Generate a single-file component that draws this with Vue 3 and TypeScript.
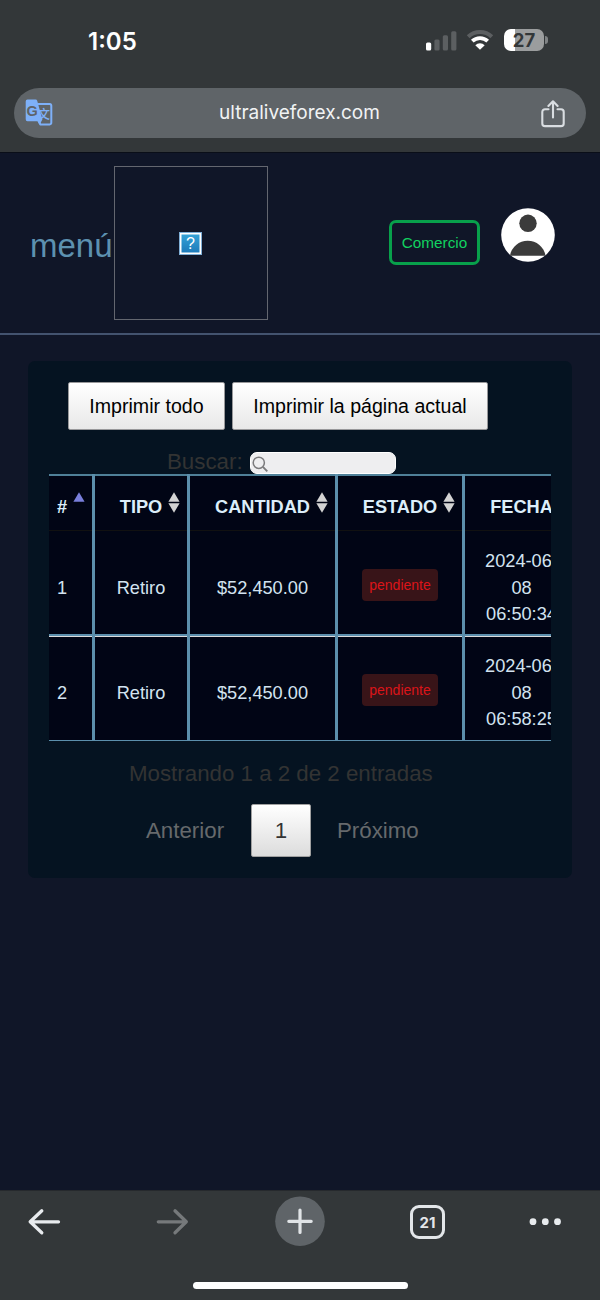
<script setup lang="ts">
interface Row {
  id: number
  type: string
  amount: string
  status: string
  date: string[]
}

const columns: string[] = ['#', 'TIPO', 'CANTIDAD', 'ESTADO', 'FECHA']

const rows: Row[] = [
  { id: 1, type: 'Retiro', amount: '$52,450.00', status: 'pendiente', date: ['2024-06-', '08', '06:50:34'] },
  { id: 2, type: 'Retiro', amount: '$52,450.00', status: 'pendiente', date: ['2024-06-', '08', '06:58:25'] },
]
</script>

<template>
  <div class="phone">
    <header class="chrome-top">
      <div class="status">
        <span class="time">1:05</span>
        <div class="indicators">
          <svg class="signal" width="31" height="20" viewBox="0 0 31 20">
            <rect x="0" y="11.5" width="5.2" height="8" rx="1.5" fill="#fff" />
            <rect x="8.4" y="8.5" width="5.2" height="11" rx="1.5" fill="#5c5f61" />
            <rect x="16.8" y="4.3" width="5.2" height="15.2" rx="1.5" fill="#5c5f61" />
            <rect x="25.2" y="0.3" width="5.2" height="19.2" rx="1.5" fill="#5c5f61" />
          </svg>
          <svg class="wifi" width="28" height="20" viewBox="0 0 28 20">
            <path d="M2.2 6.8A17 17 0 0 1 25.8 6.8" fill="none" stroke="#5c5f61" stroke-width="4" />
            <path d="M6.3 11.2A11.2 11.2 0 0 1 21.7 11.2" fill="none" stroke="#fff" stroke-width="3.8" />
            <path d="M9.3 15.2A6.8 6.8 0 0 1 18.7 15.2L14 19.8Z" fill="#fff" />
          </svg>
          <div class="battery"><span>27</span></div>
          <i class="battery-tip"></i>
        </div>
      </div>
      <div class="address">
        <svg class="translate" width="28" height="28" viewBox="0 0 28 28">
          <path d="M12.5 4.9H24.6A1.9 1.9 0 0 1 26.3 6.8V23.5A1.9 1.9 0 0 1 24.6 25.4H15.5L13 21" fill="none" stroke="#7eb0f8" stroke-width="2" />
          <path d="M2.5 0.5H10.6Q11.8 0.5 12.2 1.8L17.4 20.4L14.4 26L12.8 22.3H2.5Q0.7 22.3 0.7 20.3V2.5Q0.7 0.5 2.5 0.5Z" fill="#7eb0f8" />
          <text x="1.5" y="16.8" class="g" fill="#5f6468">G</text>
          <text x="12.6" y="20.4" class="wen" fill="#7eb0f8">文</text>
        </svg>
        <span class="url">ultraliveforex.com</span>
        <svg class="share" width="24" height="28" viewBox="0 0 24 28">
          <path d="M7.5 9.2H4A2.7 2.7 0 0 0 1.3 11.9V23.4A2.7 2.7 0 0 0 4 26.1H20A2.7 2.7 0 0 0 22.7 23.4V11.9A2.7 2.7 0 0 0 20 9.2H16.5M12 17.5V1.5M7.4 6L12 1.3L16.6 6" fill="none" stroke="#d9dde1" stroke-width="2.1" stroke-linecap="round" stroke-linejoin="round" />
        </svg>
      </div>
    </header>

    <main class="page">
      <nav class="site-nav">
        <span class="menu">menú</span>
        <div class="logo"><span class="missing">?</span></div>
        <button class="trade">Comercio</button>
        <svg class="avatar" width="54" height="54" viewBox="0 0 54 54">
          <circle cx="27" cy="27" r="26.8" fill="#fff" />
          <circle cx="27" cy="15.3" r="8.7" fill="#3b3b3b" />
          <path d="M9 47.7A18 17.8 0 0 1 44.5 47.7Z" fill="#3b3b3b" />
        </svg>
      </nav>

      <section class="panel">
        <div class="print">
          <button>Imprimir todo</button>
          <button>Imprimir la página actual</button>
        </div>
        <div class="filter">
          <span>Buscar:</span>
          <div class="search">
            <svg width="17" height="17" viewBox="0 0 17 17">
              <circle cx="6.8" cy="6.8" r="5.6" fill="none" stroke="#7b7b7d" stroke-width="1.5" />
              <path d="M10.9 10.9L15.3 15.3" stroke="#7b7b7d" stroke-width="1.9" />
            </svg>
          </div>
        </div>
        <div class="scroll">
          <table>
            <colgroup>
              <col v-for="c in columns" :key="c" />
            </colgroup>
            <thead>
              <tr>
                <th v-for="(c, i) in columns" :key="c">
                  {{ c }}
                  <svg v-if="i < 4" class="sort" width="12" height="21" viewBox="0 0 12 21">
                    <path d="M6 0.2L11.6 9.8H0.4Z" :fill="i ? '#d3d3d3' : '#797fdb'" />
                    <path v-if="i" d="M0.4 11.2H11.6L6 20.8Z" fill="#d3d3d3" />
                  </svg>
                </th>
              </tr>
            </thead>
            <tbody>
              <tr v-for="r in rows" :key="r.id">
                <td>{{ r.id }}</td>
                <td>{{ r.type }}</td>
                <td>{{ r.amount }}</td>
                <td><span class="badge">{{ r.status }}</span></td>
                <td><div v-for="d in r.date" :key="d" class="line">{{ d }}</div></td>
              </tr>
            </tbody>
          </table>
        </div>
        <p class="info">Mostrando 1 a 2 de 2 entradas</p>
        <div class="pager">
          <span>Anterior</span>
          <button>1</button>
          <span>Próximo</span>
        </div>
      </section>
    </main>

    <footer class="chrome-bottom">
      <div class="tools">
        <svg width="120" height="50" viewBox="0 0 120 50">
          <path d="M58.5 25.8H31M41.8 14.8L30.2 25.8L41.8 36.8" fill="none" stroke="#e8ebee" stroke-width="3.3" stroke-linecap="round" stroke-linejoin="round" />
        </svg>
        <svg width="120" height="50" viewBox="0 0 120 50">
          <path d="M38.3 25.8H65.5M55 14.8L66.3 25.8L55 36.8" fill="none" stroke="#76797b" stroke-width="3.3" stroke-linecap="round" stroke-linejoin="round" />
        </svg>
        <svg width="120" height="50" viewBox="0 0 120 50">
          <circle cx="60" cy="25.2" r="24.8" fill="#5f6468" />
          <path d="M48.8 25.3H71.2M60 14.1V36.5" fill="none" stroke="#e1e4e7" stroke-width="3.2" stroke-linecap="round" />
        </svg>
        <div class="tab-slot"><span class="tabs">21</span></div>
        <svg width="120" height="50" viewBox="0 0 120 50">
          <g fill="#e8ebee">
            <circle cx="53" cy="25.7" r="3.4" />
            <circle cx="65.3" cy="25.7" r="3.4" />
            <circle cx="77.5" cy="25.7" r="3.4" />
          </g>
        </svg>
      </div>
      <div class="home"></div>
    </footer>
  </div>
</template>

<style>
body {
  margin: 0;
  background: #101628;
}
</style>

<style scoped>
.phone {
  width: 600px;
  height: 1300px;
  display: flex;
  flex-direction: column;
  overflow: hidden;
  background: #101628;
  font-family: "Liberation Sans", Arial, sans-serif;
}
.phone * {
  box-sizing: border-box;
}
.phone svg {
  display: block;
  flex: none;
}
button {
  margin: 0;
  padding: 0;
  font-family: inherit;
}
.chrome-top {
  height: 153px;
  flex: none;
  background: #333739;
  border-bottom: 1px solid #0a0e18;
}
.status {
  height: 88px;
  display: flex;
  justify-content: space-between;
  padding: 0 52px 0 88px;
}
.time {
  margin-top: 27px;
  font: 600 24px/30px Inter, sans-serif;
  color: #fff;
}
.indicators {
  display: flex;
  height: 22px;
  margin-top: 29px;
}
.signal {
  margin-top: 2px;
}
.wifi {
  margin: 1px 0 0 9px;
}
.battery {
  width: 40px;
  height: 22px;
  margin-left: 10px;
  border-radius: 7px;
  background: linear-gradient(90deg, #fff 11px, #9b9d9e 11px);
  color: #333739;
  font: 700 18.5px/23px Inter, sans-serif;
  text-align: center;
}
.battery-tip {
  width: 3px;
  height: 8px;
  margin: 7px 0 0 1px;
  border-radius: 0 3px 3px 0;
  background: #808385;
}
.address {
  height: 50px;
  margin: 0 14px;
  padding: 0 21px 0 11px;
  border-radius: 25px;
  background: #5f6468;
  display: flex;
  align-items: center;
  justify-content: space-between;
}
.g {
  font: 700 14.5px "Liberation Sans", sans-serif;
}
.wen {
  font: 500 12.5px "Noto Sans CJK SC", sans-serif;
}
.url {
  margin: 0 0 1px 5px;
  color: #f1f3f4;
  font: 400 19px/28px Inter, sans-serif;
}
.share {
  margin-top: 2px;
}
.page {
  flex: 1;
}
.site-nav {
  height: 182px;
  border-bottom: 2px solid #43536f;
  padding: 13px 45px 0 30px;
  display: flex;
  align-items: flex-start;
}
.menu {
  width: 84px;
  margin-top: 60px;
  font-size: 33px;
  line-height: 40px;
  color: #5d91b0;
}
.logo {
  width: 154px;
  height: 154px;
  border: 1px solid #63666f;
  display: flex;
  align-items: center;
  justify-content: center;
}
.missing {
  width: 23px;
  height: 23px;
  margin-right: 1px;
  border: 1px solid #7faed6;
  box-shadow: inset 0 0 0 1.5px #fff;
  background: linear-gradient(#36a5d9, #1c78b8);
  color: #fff;
  font: 400 16px/21px "Liberation Sans", sans-serif;
  text-align: center;
}
.trade {
  width: 91px;
  height: 45px;
  margin: 54px 21px 0 121px;
  border: 3px solid #08a04b;
  border-radius: 7px;
  background: transparent;
  color: #12d160;
  font-size: 15.3px;
}
.avatar {
  margin-top: 42px;
}
.panel {
  width: 544px;
  height: 517px;
  margin: 26px 28px 0;
  padding: 21px 21px 0;
  border-radius: 7px;
  background: #051321;
}
.print {
  display: flex;
  gap: 7px;
  padding-left: 19px;
}
.print button {
  width: 157px;
  height: 48px;
  border: 1px solid #98989a;
  border-radius: 2px;
  background: linear-gradient(#fff, #e8e8e8);
  color: #000;
  font-size: 19.6px;
}
.print button + button {
  width: 256px;
}
.filter {
  display: flex;
  height: 44px;
  padding: 18px 0 0 118px;
  color: #333;
  font-size: 22.3px;
  line-height: 27px;
}
.filter span {
  width: 83px;
}
.search {
  width: 146px;
  height: 22px;
  margin-top: 4px;
  padding: 3px 1px;
  border: 1px solid #fff;
  border-radius: 7px;
  background: #eeeef0;
}
.scroll {
  width: 502px;
  overflow: hidden;
}
table {
  width: 529px;
  table-layout: fixed;
  border-collapse: separate;
  border-spacing: 0;
  background: #010515;
  color: #d3e3f0;
  font-size: 18.2px;
  line-height: 26.7px;
}
col:nth-child(1) { width: 46px; }
col:nth-child(2) { width: 95px; }
col:nth-child(3) { width: 148px; }
col:nth-child(4) { width: 127px; }
col:nth-child(5) { width: 113px; }
th,
td {
  padding: 0;
  text-align: center;
  vertical-align: top;
  border-right: 3px solid #5c8fac;
}
th:last-child,
td:last-child {
  border-right: 0;
}
th:first-child,
td:first-child {
  padding-left: 8px;
  text-align: left;
}
th {
  position: relative;
  height: 57px;
  padding-top: 20px;
  color: #dceefa;
  box-shadow: inset 0 2px #4f8098, inset 0 -1px #111;
}
.sort {
  position: absolute;
  right: 7px;
  top: 18px;
}
td {
  height: 105px;
  padding-top: 44px;
}
tr:first-child td {
  box-shadow: inset 0 -2px #5c8fac;
}
tr:last-child td {
  box-shadow: inset 0 1px #dcdcdc, inset 0 -1px #5c8fac;
}
td:last-child {
  padding-top: 17px;
}
td:nth-child(4) {
  padding-top: 38px;
}
.badge {
  display: block;
  width: 76px;
  height: 32px;
  margin: 0 auto;
  border-radius: 4px;
  background: #381418;
  color: #db1419;
  font-size: 14px;
  line-height: 32px;
}
.info {
  margin: 19px 0 0 80px;
  font-size: 22.3px;
  line-height: 27px;
  color: #333;
}
.pager {
  display: flex;
  align-items: center;
  margin-top: 17px;
  padding-left: 97px;
  color: #66696c;
  font-size: 22.3px;
}
.pager button {
  width: 60px;
  height: 53px;
  margin: 0 26px 0 27px;
  border: 1px solid #a0a0a0;
  border-radius: 2px;
  background: linear-gradient(#fff, #dcdcdc);
  color: #333;
  font-size: 22.3px;
}
.pager span {
  padding-top: 1px;
}
.pager span:first-child {
  width: 78px;
  white-space: nowrap;
}
.chrome-bottom {
  height: 110px;
  flex: none;
  border-top: 1px solid #26292d;
  background: #333739;
}
.tools {
  display: flex;
  margin-top: 5px;
}
.tab-slot {
  width: 120px;
  height: 50px;
  padding: 9px 0 0 50px;
}
.tabs {
  display: block;
  width: 35px;
  height: 34px;
  border: 3px solid #e3e6e9;
  border-radius: 9px;
  color: #e3e6e9;
  font: 700 15px/29px Inter, sans-serif;
  text-align: center;
}
.home {
  width: 215px;
  height: 7px;
  margin: 36px auto 0;
  border-radius: 4px;
  background: #fff;
}
</style>
